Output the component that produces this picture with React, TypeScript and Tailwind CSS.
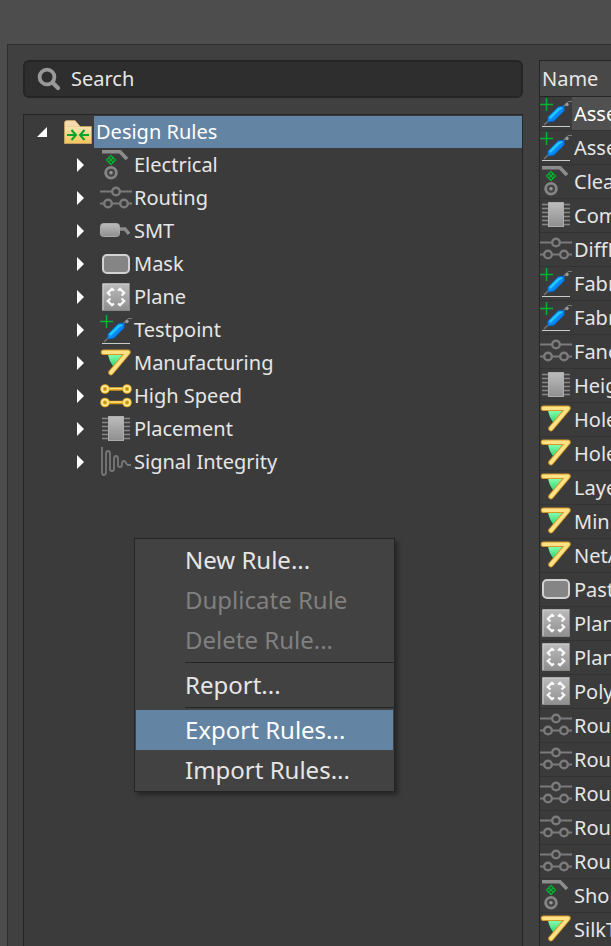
import type { ReactNode } from "react";

type IconName =
  | "clearance"
  | "routing"
  | "smt"
  | "mask"
  | "plane"
  | "testpoint"
  | "manufacturing"
  | "highSpeed"
  | "placement"
  | "signal"
  | "folder";

const pinRows = [5, 9, 13, 17, 21, 25];

const drawings: Record<IconName, ReactNode> = {
  clearance: (
    <>
      <path d="M2 2.8H20L27 10" fill="none" stroke="#8c8c8c" strokeWidth="3.6" />
      <path
        d="M11 6.5L15.5 11L11 15.5L6.5 11ZM8.7 8.7L13.3 13.3M13.3 8.7L8.7 13.3"
        fill="none"
        stroke="#00b22d"
        strokeWidth="1.3"
      />
      <circle cx="11" cy="23.7" r="5.4" fill="#444" stroke="#858585" strokeWidth="2.8" />
      <circle cx="11" cy="23.7" r="1.8" fill="#969696" />
    </>
  ),
  routing: (
    <g fill="#3b3b3b" stroke="#7b7b7b">
      <path d="M0 9.5H32M0 21.5H32" strokeWidth="2" />
      <circle cx="16" cy="9.5" r="3.8" strokeWidth="2.4" />
      <circle cx="8" cy="21.5" r="3.8" strokeWidth="2.4" />
      <circle cx="24" cy="21.5" r="3.8" strokeWidth="2.4" />
    </g>
  ),
  smt: (
    <>
      <path d="M19 14H25L29 19" fill="none" stroke="#8c8c8c" strokeWidth="3.4" />
      <rect x="0.5" y="8.5" width="19" height="13" rx="3" fill="url(#metal)" stroke="#aaa" />
    </>
  ),
  mask: (
    <rect x="3" y="7" width="26" height="18" rx="4" fill="#858585" stroke="#d2d2d2" strokeWidth="2" />
  ),
  plane: (
    <>
      <rect x="2.5" y="2.5" width="27" height="27" fill="url(#metal)" stroke="#888" />
      <path d="M3 29V3H29" fill="none" stroke="#cfcfcf" />
      <path
        d="M14 9.5L12 7.8L7.8 12L10.5 14.5M18 9.5L20 7.8L24.2 12L21.5 14.5M14 22.5L12 24.2L7.8 20L10.5 17.5M18 22.5L20 24.2L24.2 20L21.5 17.5"
        fill="none"
        stroke="#fafafa"
        strokeWidth="2.2"
      />
    </>
  ),
  testpoint: (
    <>
      <path d="M4 28L10 22M22 11L26 7" stroke="#707070" strokeWidth="1.6" />
      <path d="M26 7L28 4.5H32" fill="none" stroke="#7b7b7b" />
      <circle cx="27" cy="7.5" r="1.7" fill="#9b9b9b" />
      <path d="M8 25V20L18 10L24 9V14L14 24Z" fill="url(#probe)" stroke="#0867cf" strokeLinejoin="round" />
      <path d="M10 21L19 12L22 11" fill="none" stroke="#24ccff" strokeWidth="1.8" />
      <path d="M0 7.5H13M6.5 1V14" stroke="#00b22d" strokeWidth="1.5" />
      <path d="M2 29.5H30" stroke="#c9cdc7" />
    </>
  ),
  manufacturing: (
    <>
      <path d="M8 7H24L13.5 19.5Q9 14 8 7Z" fill="url(#green)" />
      <path
        d="M3.5 5.3H28L11 25.5"
        fill="none"
        stroke="#d59927"
        strokeWidth="5.6"
        strokeLinecap="round"
        strokeLinejoin="round"
      />
      <path
        d="M3.5 5.3H28L11 25.5"
        fill="none"
        stroke="#ffe287"
        strokeWidth="3.6"
        strokeLinecap="round"
        strokeLinejoin="round"
      />
    </>
  ),
  highSpeed: (
    <>
      <path d="M8 9H24M8 22.5H24" stroke="#dc9d16" strokeWidth="3.6" />
      <path d="M8 8.5H24M8 22H24" stroke="#ffe37a" strokeWidth="1.6" />
      <g fill="#b98f1c" stroke="#e5aa25" strokeWidth="3.6">
        <circle cx="5" cy="9" r="3" />
        <circle cx="27" cy="9" r="3" />
        <circle cx="5" cy="22.5" r="3" />
        <circle cx="27" cy="22.5" r="3" />
      </g>
      <g fill="none" stroke="#fff09b" strokeWidth="1.6">
        <circle cx="5" cy="9" r="3" />
        <circle cx="27" cy="9" r="3" />
        <circle cx="5" cy="22.5" r="3" />
        <circle cx="27" cy="22.5" r="3" />
      </g>
    </>
  ),
  placement: (
    <>
      {pinRows.map((y) => (
        <path key={y} d={`M2 ${y + 0.5}H30`} stroke="#858585" strokeWidth="1.6" />
      ))}
      <rect x="8.5" y="3.5" width="15" height="24" fill="url(#metal)" stroke="#adadad" />
    </>
  ),
  signal: (
    <path
      d="M2 1V26Q2 29 4 29Q6 29 6 26V8Q6 5 8 5Q10 5 10 8V23Q10 25 12 25Q14 25 14 23V13Q14 10 16 10Q18 10 18 13V19Q18 21 20 21Q22 21 22 18Q22 15 24 15Q25 15 26 17T28 19H31"
      fill="none"
      stroke="#777"
      strokeWidth="1.8"
    />
  ),
  folder: (
    <>
      <path d="M2.5 27.5V6L4 4.5H13L18 10.5H29.5V27.5Z" fill="#ecc57b" stroke="#c2a065" />
      <path d="M3 6L4.5 5H13L18 10.5H3Z" fill="#f5dcae" />
      <rect x="3" y="11" width="26" height="16" fill="url(#gold)" />
      <path
        d="M5 19H14M9.5 14L14 19L9.5 24M27 19H18M22.5 14L18 19L22.5 24"
        fill="none"
        stroke="#00a32c"
        strokeWidth="2"
      />
    </>
  ),
};

function Icon({ name }: { name: IconName }) {
  return (
    <svg viewBox="0 0 32 32" className="size-8 shrink-0" aria-hidden="true">
      {drawings[name]}
    </svg>
  );
}

function Gradients() {
  return (
    <svg className="absolute size-0" aria-hidden="true">
      <defs>
        <linearGradient id="metal" x1="0" y1="0" x2="0" y2="1">
          <stop offset="0" stopColor="#bcbcbc" />
          <stop offset="1" stopColor="#8f8f8f" />
        </linearGradient>
        <linearGradient id="probe" x1="0" y1="0" x2="1" y2="1">
          <stop offset="0.3" stopColor="#12b0ff" />
          <stop offset="0.8" stopColor="#0465e8" />
        </linearGradient>
        <linearGradient id="green" x1="0" y1="0" x2="0" y2="1">
          <stop offset="0" stopColor="#8dffae" />
          <stop offset="1" stopColor="#2bd673" />
        </linearGradient>
        <linearGradient id="gold" x1="0" y1="0" x2="0" y2="1">
          <stop offset="0" stopColor="#fae3af" />
          <stop offset="1" stopColor="#f3c55c" />
        </linearGradient>
      </defs>
    </svg>
  );
}

const categories: { label: string; icon: IconName }[] = [
  { label: "Electrical", icon: "clearance" },
  { label: "Routing", icon: "routing" },
  { label: "SMT", icon: "smt" },
  { label: "Mask", icon: "mask" },
  { label: "Plane", icon: "plane" },
  { label: "Testpoint", icon: "testpoint" },
  { label: "Manufacturing", icon: "manufacturing" },
  { label: "High Speed", icon: "highSpeed" },
  { label: "Placement", icon: "placement" },
  { label: "Signal Integrity", icon: "signal" },
];

const rules: { name: string; icon: IconName }[] = [
  { name: "AssemblyTestpoint", icon: "testpoint" },
  { name: "AssemblyTestPointUsage", icon: "testpoint" },
  { name: "Clearance", icon: "clearance" },
  { name: "ComponentClearance", icon: "placement" },
  { name: "DiffPairsRouting", icon: "routing" },
  { name: "FabricationTestpoint", icon: "testpoint" },
  { name: "FabricationTestPointUsage", icon: "testpoint" },
  { name: "Fanout_BGA", icon: "routing" },
  { name: "Height", icon: "placement" },
  { name: "HoleSize", icon: "manufacturing" },
  { name: "HoleToHoleClearance", icon: "manufacturing" },
  { name: "LayerPairs", icon: "manufacturing" },
  { name: "MinimumSolderMaskSliver", icon: "manufacturing" },
  { name: "NetAntennae", icon: "manufacturing" },
  { name: "PasteMaskExpansion", icon: "mask" },
  { name: "PlaneClearance", icon: "plane" },
  { name: "PlaneConnect", icon: "plane" },
  { name: "PolygonConnect", icon: "plane" },
  { name: "RoutingCorners", icon: "routing" },
  { name: "RoutingLayers", icon: "routing" },
  { name: "RoutingPriority", icon: "routing" },
  { name: "RoutingTopology", icon: "routing" },
  { name: "RoutingVias", icon: "routing" },
  { name: "ShortCircuit", icon: "clearance" },
  { name: "SilkToSolderMaskClearance", icon: "manufacturing" },
];

function MenuItem({ label, disabled, active }: { label: string; disabled?: boolean; active?: boolean }) {
  return (
    <button
      type="button"
      role="menuitem"
      disabled={disabled}
      className={`block h-10 w-full pl-[49px] text-left text-[24px] leading-10 disabled:text-[#808080] ${
        active ? "bg-[#6384a3] text-white" : "text-[#e6e6e6]"
      }`}
    >
      {label}
    </button>
  );
}

function MenuSeparator() {
  return <hr className="mt-0.5 -mr-px mb-0.5 ml-[49px] border-t border-[#252525]" />;
}

function ContextMenu() {
  return (
    <div
      role="menu"
      className="absolute top-[538px] left-[134px] w-[261px] border border-[#252525] bg-[#424242] p-px shadow-[3px_3px_4px_rgba(0,0,0,0.35)]"
    >
      <MenuItem label="New Rule..." />
      <MenuItem label="Duplicate Rule" disabled />
      <MenuItem label="Delete Rule..." disabled />
      <MenuSeparator />
      <MenuItem label="Report..." />
      <MenuSeparator />
      <MenuItem label="Export Rules..." active />
      <MenuItem label="Import Rules..." />
    </div>
  );
}

function SearchBox() {
  return (
    <label className="flex h-[38px] shrink-0 items-center gap-2.5 rounded-md border-2 border-[#252525] bg-[#2e2e2e] pl-3">
      <svg viewBox="0 0 24 24" className="size-6 shrink-0" aria-hidden="true">
        <g fill="none" stroke="#999" strokeLinecap="round">
          <circle cx="10" cy="10" r="7.4" strokeWidth="3.8" />
          <path d="M15.5 15.5L21 21" strokeWidth="4.2" />
        </g>
      </svg>
      <input
        type="text"
        aria-label="Search rules"
        placeholder="Search"
        className="min-w-0 flex-1 bg-transparent text-[20px] leading-7 text-[#e6e6e6] outline-none placeholder:text-[#e6e6e6]"
      />
    </label>
  );
}

function RuleTree() {
  return (
    <ul role="tree" className="mt-4 min-h-0 flex-1 border border-b-0 border-[#252525] bg-[#3b3b3b]">
      <li role="treeitem" aria-expanded="true" aria-selected="true">
        <div className="flex h-[34px] items-center pl-[13px]">
          <svg viewBox="0 0 10 10" className="mr-[15px] size-2.5" aria-hidden="true">
            <path d="M10 0V10H0Z" fill="#fff" />
          </svg>
          <Icon name="folder" />
          <span className="h-8 flex-1 bg-[#6384a3] pl-0.5 leading-8 text-white">Design Rules</span>
        </div>
        <ul role="group">
          {categories.map(({ label, icon }) => (
            <li key={label} role="treeitem" className="flex h-[33px] items-center pb-px pl-[53px]">
              <svg viewBox="0 0 7 14" className="mr-4 h-3.5 w-[7px]" aria-hidden="true">
                <path d="M0 0L7 7L0 14Z" fill="#fff" />
              </svg>
              <Icon name={icon} />
              <span className="pl-0.5 leading-8">{label}</span>
            </li>
          ))}
        </ul>
      </li>
    </ul>
  );
}

function RuleTable() {
  return (
    <div className="min-w-0 flex-1 overflow-hidden border-t border-l border-[#252525] bg-[#3b3b3b]">
      <table className="w-full table-fixed border-collapse">
        <thead>
          <tr className="h-[35px] border-b border-[#252525] bg-[#484848]">
            <th scope="col" className="p-0 pt-0.5 pl-0.5 text-left font-normal">
              Name
            </th>
          </tr>
        </thead>
        <tbody>
          {rules.map(({ name, icon }, index) => (
            <tr key={name}>
              <td className="p-0">
                <div className="flex h-[34px] items-center border-b border-[#333]">
                  <Icon name={icon} />
                  <span
                    className={`h-[33px] flex-1 overflow-hidden pl-0.5 leading-[34px] whitespace-nowrap ${
                      index === 0 ? "bg-[#505050] text-white" : ""
                    }`}
                  >
                    {name}
                  </span>
                </div>
              </td>
            </tr>
          ))}
        </tbody>
      </table>
    </div>
  );
}

export default function App() {
  return (
    <main className="relative flex h-screen flex-col overflow-hidden bg-[#4d4d4d] pt-11 pl-[7px] font-['Noto_Sans','Open_Sans',sans-serif] text-[20px] text-[#e6e6e6]">
      <Gradients />
      <div className="flex min-h-0 flex-1 gap-4 border-t border-l border-[#2e2e2e] bg-[#404040] pt-[15px] pl-[15px]">
        <section className="flex w-[500px] shrink-0 flex-col">
          <SearchBox />
          <RuleTree />
        </section>
        <RuleTable />
      </div>
      <ContextMenu />
    </main>
  );
}
